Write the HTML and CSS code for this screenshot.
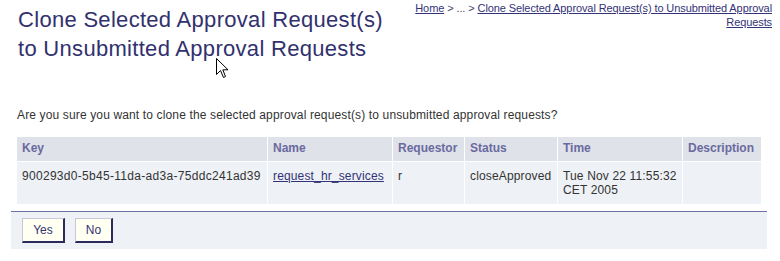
FILE: index.html
```html
<!DOCTYPE html>
<html>
<head>
<meta charset="utf-8">
<link rel="stylesheet" href="styles.css">
</head>
<body>
<div class="page">
  <div class="top">
    <h1 class="title">Clone Selected Approval Request(s)<br>to Unsubmitted Approval Requests</h1>
    <div class="crumbs"><a href="#">Home</a> &gt; ... &gt; <a href="#">Clone Selected Approval Request(s) to Unsubmitted Approval Requests</a></div>
  </div>
  <p class="question">Are you sure you want to clone the selected approval request(s) to unsubmitted approval requests?</p>
  <table class="grid">
    <thead>
      <tr>
        <th class="c-key">Key</th>
        <th class="c-name">Name</th>
        <th class="c-req">Requestor</th>
        <th class="c-status">Status</th>
        <th class="c-time">Time</th>
        <th class="c-desc">Description</th>
      </tr>
    </thead>
    <tbody>
      <tr>
        <td class="mono-ish">900293d0-5b45-11da-ad3a-75ddc241ad39</td>
        <td><a href="#">request_hr_services</a></td>
        <td>r</td>
        <td>closeApproved</td>
        <td>Tue Nov 22 11:55:32<br>CET 2005</td>
        <td></td>
      </tr>
    </tbody>
  </table>
  <div class="actions">
    <button class="btn btn-yes">Yes</button>
    <button class="btn btn-no">No</button>
  </div>
</div>
<svg class="cursor" width="13" height="21" viewBox="0 0 13 21"><path d="M0.5 0.5 L0.5 16.5 L4.5 12.5 L7.5 19.5 L9.5 18.5 L6.8 11.8 L12 11.8 Z" fill="#fff" stroke="#000" stroke-width="1"/></svg>
</body>
</html>
```
FILE: styles.css
```css
html, body {
  margin: 0;
  padding: 0;
  background: #ffffff;
}
body {
  font-family: "Liberation Sans", Arial, sans-serif;
  color: #333333;
  position: relative;
}
.page {
  padding: 0 13px 0 11px;
}
.top {
  display: flex;
  justify-content: space-between;
  align-items: flex-start;
}
.title {
  margin: 5px 0 0 7px;
  font-size: 22px;
  line-height: 29px;
  font-weight: normal;
  color: #31316e;
  letter-spacing: 0.3px;
}
.crumbs {
  width: 360px;
  margin: 1px -5px 0 0;
  text-align: right;
  font-size: 11px;
  line-height: 14px;
  color: #444466;
  letter-spacing: -0.1px;
}
.crumbs a {
  color: #333377;
}
.question {
  margin: 45px 0 0 6px;
  font-size: 12px;
  line-height: 14px;
  color: #333333;
  letter-spacing: 0.14px;
}
.grid {
  margin: 14px 0 0 6px;
  border-collapse: separate;
  border-spacing: 1px;
  width: 746px;
  font-size: 12px;
  line-height: 14px;
  position: relative;
  left: -1px;
}
.grid th {
  background: #dfe2e8;
  color: #6a6aa0;
  font-weight: bold;
  text-align: left;
  padding: 4px 5px 6px;
  white-space: nowrap;
}
.grid td {
  background: #eef1f6;
  color: #333333;
  vertical-align: top;
  padding: 7px 5px 7px;
  letter-spacing: 0.15px;
}
.grid td.mono-ish {
  letter-spacing: 0.3px;
}
.grid td a {
  color: #333377;
}
.c-key { width: 240px; }
.c-name { width: 114px; }
.c-req { width: 61px; }
.c-status { width: 82px; }
.c-time { width: 114px; }
.c-desc { width: 68px; }
.actions {
  margin-top: 6px;
  border-top: 1px solid #6e6ea3;
  background: #eef1f6;
  height: 38px;
  padding: 6px 11px 0;
  box-sizing: border-box;
  display: flex;
  gap: 10px;
  align-items: flex-start;
}
.btn {
  font-family: "Liberation Sans", Arial, sans-serif;
  font-size: 12px;
  color: #333377;
  background: #fffff2;
  border-style: solid;
  border-width: 1px 2px 2px 1px;
  border-color: #c8c8d8 #2a2a5c #2a2a5c #c8c8d8;
  height: 25px;
  padding: 0;
  margin: 0;
}
.btn-yes { width: 43px; }
.btn-no { width: 38px; }
.cursor {
  position: absolute;
  left: 216px;
  top: 58px;
}
```
